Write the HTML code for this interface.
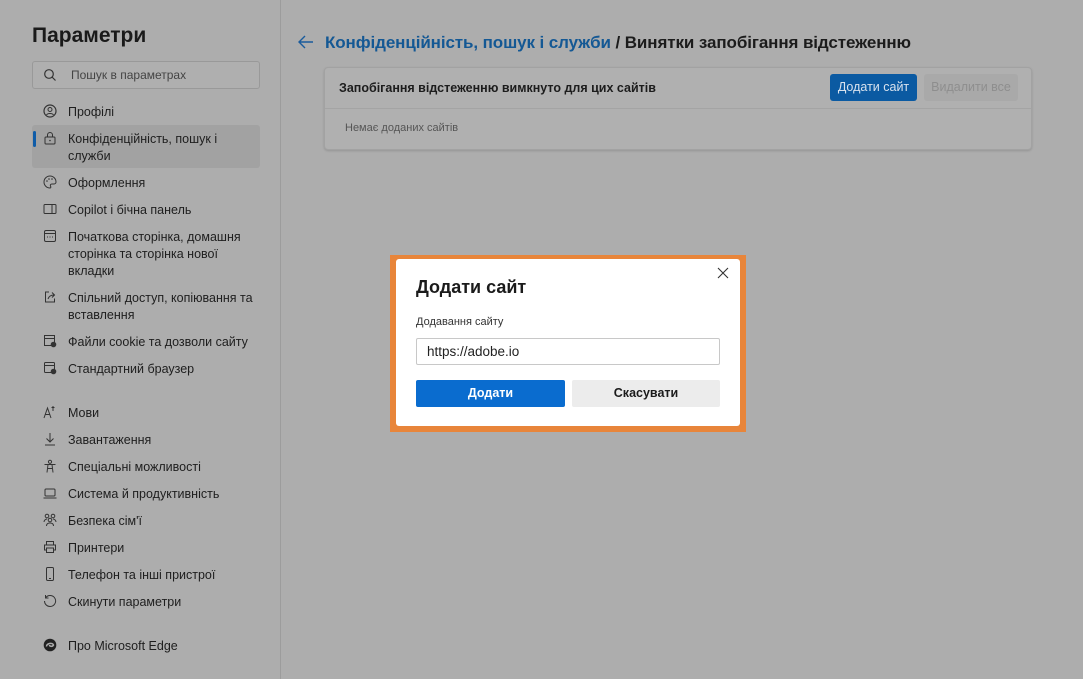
<!DOCTYPE html>
<html><head><meta charset="utf-8"><style>
*{margin:0;padding:0;box-sizing:border-box}
body{width:1083px;height:679px;overflow:hidden;background:#adadad;font-family:"Liberation Sans","DejaVu Sans",sans-serif;color:#1c1c1c;position:relative}
.abs{position:absolute}
.side{position:absolute;left:0;top:0;width:281px;height:679px;border-right:1px solid #9c9c9c}
.nav{position:absolute;left:68px;font-size:12.5px;line-height:17px;color:#1e1e1e}
.ic{position:absolute;left:43px;width:14px;height:14px}
</style></head><body>
<div class="side">
<div class="abs" style="left:32px;top:24px;font-size:21px;font-weight:bold;color:#1a1a1a">Параметри</div>
<div class="abs" style="left:32px;top:61px;width:228px;height:28px;border:1px solid #999;border-radius:3px;background:#afafaf"></div>
<svg class="abs" style="left:43px;top:68px" width="14" height="14" viewBox="0 0 14 14"><circle cx="6" cy="6" r="4.3" fill="none" stroke="#333" stroke-width="1.2"/><path d="M9 9l3.5 3.5" stroke="#333" stroke-width="1.2"/></svg>
<div class="abs" style="left:71px;top:68px;font-size:12px;color:#444">Пошук в параметрах</div>
<div class="abs" style="left:32px;top:125px;width:228px;height:43px;background:#a2a2a2;border-radius:3px"></div>
<div class="abs" style="left:33px;top:131px;width:3px;height:16px;background:#0f5ca8;border-radius:2px"></div>

<svg class="ic" style="top:104px" viewBox="0 0 14 14"><circle cx="7" cy="7" r="6" fill="none" stroke="#333" stroke-width="1.2"/><circle cx="7" cy="5.5" r="2" fill="none" stroke="#333"/><path d="M3.5 11c1-2 6-2 7 0" fill="none" stroke="#333"/></svg>
<div class="nav" style="top:104px">Профілі</div>
<svg class="ic" style="top:131px" viewBox="0 0 14 14"><rect x="2" y="6" width="10" height="7" rx="1" fill="none" stroke="#333"/><path d="M4.5 6V4a2.5 2.5 0 015 0v2" fill="none" stroke="#333"/><circle cx="7" cy="9.5" r=".8" fill="#333"/></svg>
<div class="nav" style="top:131px">Конфіденційність, пошук і<br>служби</div>
<svg class="ic" style="top:175px" viewBox="0 0 14 14"><path d="M7 1a6 6 0 100 12c1 0 1-1 .5-2s0-2 1.5-2h2a2 2 0 002-2A6 6 0 007 1z" fill="none" stroke="#333"/><circle cx="4" cy="6" r=".8" fill="#333"/><circle cx="6" cy="4" r=".8" fill="#333"/><circle cx="9" cy="4" r=".8" fill="#333"/></svg>
<div class="nav" style="top:175px">Оформлення</div>
<svg class="ic" style="top:202px" viewBox="0 0 14 14"><rect x="1" y="2.5" width="12" height="9" rx="1" fill="none" stroke="#333"/><path d="M9 2.5v9" stroke="#333"/></svg>
<div class="nav" style="top:202px">Copilot і бічна панель</div>
<svg class="ic" style="top:229px" viewBox="0 0 14 14"><rect x="1.5" y="1.5" width="11" height="11" rx="1.5" fill="none" stroke="#333"/><path d="M1.5 4.5h11M4 8h1M6.5 8h1M9 8h1" stroke="#333"/></svg>
<div class="nav" style="top:229px">Початкова сторінка, домашня<br>сторінка та сторінка нової<br>вкладки</div>
<svg class="ic" style="top:290px" viewBox="0 0 14 14"><path d="M6 2H2.5v10h9V8.5" fill="none" stroke="#333"/><path d="M5 9c1-3 3-4 6-4M9 2.5l2.5 2.5L9 7.5" fill="none" stroke="#333"/></svg>
<div class="nav" style="top:290px">Спільний доступ, копіювання та<br>вставлення</div>
<svg class="ic" style="top:334px" viewBox="0 0 14 14"><rect x="1.5" y="1.5" width="10" height="10" fill="none" stroke="#333"/><path d="M1.5 4.5h10" stroke="#333"/><circle cx="10.5" cy="10.5" r="2.8" fill="#333"/></svg>
<div class="nav" style="top:334px">Файли cookie та дозволи сайту</div>
<svg class="ic" style="top:361px" viewBox="0 0 14 14"><rect x="1.5" y="1.5" width="10" height="10" rx="1" fill="none" stroke="#333"/><path d="M1.5 4.5h10" stroke="#333"/><circle cx="10.5" cy="10.5" r="2.8" fill="#333"/></svg>
<div class="nav" style="top:361px">Стандартний браузер</div>

<svg class="ic" style="top:405px" viewBox="0 0 14 14"><path d="M1 13L4.5 3 8 13M2.5 9.5h4M10 1v5M8.5 2.5h3" fill="none" stroke="#333"/></svg>
<div class="nav" style="top:405px">Мови</div>
<svg class="ic" style="top:432px" viewBox="0 0 14 14"><path d="M7 1v9M3.5 6.5L7 10l3.5-3.5M2 13h10" fill="none" stroke="#333"/></svg>
<div class="nav" style="top:432px">Завантаження</div>
<svg class="ic" style="top:459px" viewBox="0 0 14 14"><circle cx="7" cy="2.8" r="1.6" fill="none" stroke="#333"/><path d="M1.5 5.5h11M5 5.5l-1 8M9 5.5l1 8M5 9.5h4" fill="none" stroke="#333"/></svg>
<div class="nav" style="top:459px">Спеціальні можливості</div>
<svg class="ic" style="top:486px" viewBox="0 0 14 14"><rect x="2" y="3" width="10" height="7" rx="1" fill="none" stroke="#333"/><path d="M0.5 12h13" stroke="#333"/></svg>
<div class="nav" style="top:486px">Система й продуктивність</div>
<svg class="ic" style="top:513px" viewBox="0 0 14 14"><circle cx="4" cy="3" r="1.8" fill="none" stroke="#333"/><circle cx="10" cy="3" r="1.8" fill="none" stroke="#333"/><circle cx="7" cy="7" r="1.8" fill="none" stroke="#333"/><path d="M1 9c0-2 2-3 3-3M13 9c0-2-2-3-3-3M3.5 13c0-2 1.5-3 3.5-3s3.5 1 3.5 3" fill="none" stroke="#333"/></svg>
<div class="nav" style="top:513px">Безпека сім'ї</div>
<svg class="ic" style="top:540px" viewBox="0 0 14 14"><path d="M3.5 5V1.5h7V5M3.5 10H1.5V5h11v5h-2" fill="none" stroke="#333"/><rect x="3.5" y="8" width="7" height="4.5" fill="none" stroke="#333"/></svg>
<div class="nav" style="top:540px">Принтери</div>
<svg class="ic" style="top:567px" viewBox="0 0 14 14"><rect x="3.5" y="0.5" width="7" height="13" rx="1.2" fill="none" stroke="#333"/><path d="M6 11.5h2" stroke="#333"/></svg>
<div class="nav" style="top:567px">Телефон та інші пристрої</div>
<svg class="ic" style="top:594px" viewBox="0 0 14 14"><path d="M2.5 4A5.5 5.5 0 117 12.5 5.5 5.5 0 011.5 7M2.5 1v3h3" fill="none" stroke="#333"/></svg>
<div class="nav" style="top:594px">Скинути параметри</div>
<svg class="ic" style="top:638px" viewBox="0 0 14 14"><circle cx="7" cy="7" r="6.3" fill="#222"/><path d="M3.5 8.5c0-3 6-4.5 7-1.5-1 2-4 1.5-4 0" fill="none" stroke="#adadad" stroke-width="1.5"/></svg>
<div class="nav" style="top:638px">Про Microsoft Edge</div>
</div>

<svg class="abs" style="left:297px;top:34px" width="18" height="16" viewBox="0 0 18 16"><path d="M16 8H2M8 2L2 8l6 6" fill="none" stroke="#1a5b9c" stroke-width="1.4"/></svg>
<div class="abs" style="left:325px;top:33px;font-size:17px;font-weight:bold;white-space:nowrap;letter-spacing:-0.1px"><span style="color:#145894">Конфіденційність, пошук і служби</span> / Винятки запобігання відстеженню</div>

<div class="abs" style="left:324px;top:67px;width:708px;height:83px;background:#b0b0b0;border:1px solid #a2a2a2;border-radius:4px;box-shadow:0 1px 2px rgba(0,0,0,.15)"></div>
<div class="abs" style="left:325px;top:108px;width:706px;height:1px;background:#a4a4a4"></div>
<div class="abs" style="left:339px;top:81px;font-size:12.5px;font-weight:bold">Запобігання відстеженню вимкнуто для цих сайтів</div>
<div class="abs" style="left:830px;top:74px;width:87px;height:27px;background:#0b5aa2;border-radius:3px;color:#d8e2ee;font-size:12.5px;text-align:center;line-height:27px">Додати сайт</div>
<div class="abs" style="left:924px;top:74px;width:94px;height:27px;background:#a9a9a9;border-radius:3px;color:#8e8e8e;font-size:12.5px;text-align:center;line-height:27px">Видалити все</div>
<div class="abs" style="left:345px;top:122px;font-size:11px;color:#555">Немає доданих сайтів</div>

<div class="abs" style="left:390px;top:255px;width:356px;height:177px;background:#e8853a"></div>
<div class="abs" style="left:396px;top:259px;width:344px;height:167px;background:#fff;border-radius:3px"></div>
<svg class="abs" style="left:717px;top:267px" width="12" height="12" viewBox="0 0 12 12"><path d="M1 1l10 10M11 1L1 11" stroke="#333" stroke-width="1.1"/></svg>
<div class="abs" style="left:416px;top:277px;font-size:18px;font-weight:bold;color:#1b1b1b">Додати сайт</div>
<div class="abs" style="left:416px;top:316px;font-size:11px;color:#333">Додавання сайту</div>
<div class="abs" style="left:416px;top:338px;width:304px;height:27px;border:1px solid #c8c8c8;border-radius:2px;font-size:13.5px;line-height:25px;padding-left:10px;color:#222">https://adobe.io</div>
<div class="abs" style="left:416px;top:380px;width:149px;height:27px;background:#0a6ccf;border-radius:2px;color:#fff;font-size:12.5px;font-weight:bold;text-align:center;line-height:27px">Додати</div>
<div class="abs" style="left:572px;top:380px;width:148px;height:27px;background:#ececec;border-radius:2px;color:#1b1b1b;font-size:12.5px;font-weight:bold;text-align:center;line-height:27px">Скасувати</div>
</body></html>
